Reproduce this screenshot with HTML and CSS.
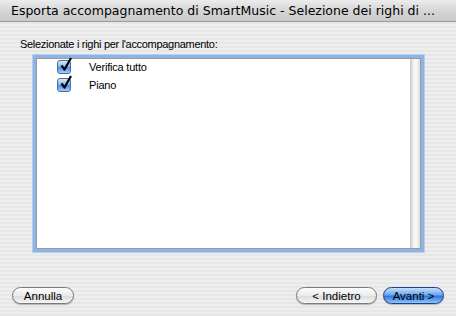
FILE: index.html
```html
<!DOCTYPE html>
<html lang="it">
<head>
    <meta charset="UTF-8">
    <title>Esporta accompagnamento di SmartMusic</title>
    <link rel="stylesheet" href="styles.css">
</head>
<body>
    <div class="window">
        <div class="titlebar">Esporta accompagnamento di SmartMusic - Selezione dei righi di ...</div>
        <div class="content">
            <div class="prompt">Selezionate i righi per l'accompagnamento:</div>
            <div class="listbox">
                <div class="list">
                    <label class="row">
                        <span class="check">
                            <svg width="16" height="16" viewBox="0 0 16 16"><path d="M3.5 8.5 L6.5 12.5 L13 1" fill="none" stroke="#000" stroke-width="2.2" stroke-linejoin="round"/></svg>
                        </span>
                        <span class="name">Verifica tutto</span>
                    </label>
                    <label class="row">
                        <span class="check">
                            <svg width="16" height="16" viewBox="0 0 16 16"><path d="M3.5 8.5 L6.5 12.5 L13 1" fill="none" stroke="#000" stroke-width="2.2" stroke-linejoin="round"/></svg>
                        </span>
                        <span class="name">Piano</span>
                    </label>
                </div>
                <div class="scrolltrack"></div>
            </div>
        </div>
        <div class="buttons">
            <button class="btn cancel">Annulla</button>
            <div class="spacer"></div>
            <button class="btn back">&lt; Indietro</button>
            <button class="btn default">Avanti &gt;</button>
        </div>
    </div>
</body>
</html>
```

FILE: styles.css
```css
body {
    margin: 0;
    font-family: "Liberation Sans", Arial, sans-serif;
    font-size: 11px;
    color: #000;
}
.window {
    width: 456px;
    height: 316px;
    display: flex;
    flex-direction: column;
    background: repeating-linear-gradient(#eeeeee 0 2px, #e7e7e7 2px 4px);
}
.titlebar {
    height: 21px;
    line-height: 22px;
    padding-left: 11px;
    font-family: "DejaVu Sans", Verdana, sans-serif;
    font-size: 12.5px;
    white-space: nowrap;
    overflow: hidden;
    background: linear-gradient(#ececec, #d6d6d6 50%, #c9c9c9);
    border-bottom: 1px solid #9a9a9a;
}
.content {
    flex: 1;
    padding: 15px 32px 0 20px;
}
.prompt {
    height: 14px;
    line-height: 14px;
    letter-spacing: -0.3px;
}
.listbox {
    box-sizing: border-box;
    margin: 4px 0 0 13px;
    height: 197px;
    display: flex;
    background: #fff;
    border: 3px solid #8db4e4;
    box-shadow: inset 0 0 0 1px #9a9a9a, 0 0 0 1px #b7cfee;
}
.list {
    flex: 1;
    padding: 0 0 0 21px;
}
.row {
    display: flex;
    align-items: center;
    height: 18px;
}
.check {
    position: relative;
    width: 12px;
    height: 12px;
    border: 1px solid #4a6e9c;
    border-radius: 3px;
    background: linear-gradient(#dbe9fb, #7fb0ee 50%, #4f8ee0 55%, #a6d0fb);
}
.check svg {
    position: absolute;
    left: 0;
    top: -4px;
}
.name {
    margin-left: 18px;
    letter-spacing: -0.2px;
}
.scrolltrack {
    width: 10px;
    margin: 1px 1px 1px 0;
    background: linear-gradient(90deg, #c9c9c9, #f4f4f4 40%, #fafafa 60%, #dddddd);
}
.buttons {
    display: flex;
    align-items: center;
    gap: 6px;
    padding: 0 12px 12px 12px;
}
.spacer {
    flex: 1;
}
.btn {
    box-sizing: border-box;
    height: 17px;
    padding: 0;
    white-space: nowrap;
    font-family: "Liberation Sans", Arial, sans-serif;
    font-size: 11.5px;
    border: 1px solid #7a7a7a;
    border-radius: 9px;
    background: linear-gradient(#fdfdfd, #ebebeb 50%, #dcdcdc 55%, #f6f6f6);
    box-shadow: 0 1px 1px rgba(0,0,0,0.25);
}
.btn.cancel {
    width: 62px;
}
.btn.back {
    width: 81px;
}
.btn.default {
    width: 61px;
    border-color: #1f3f86;
    background: linear-gradient(#c6e0fb, #6ca8ef 45%, #2f78e0 55%, #8ec6fb);
}
```
